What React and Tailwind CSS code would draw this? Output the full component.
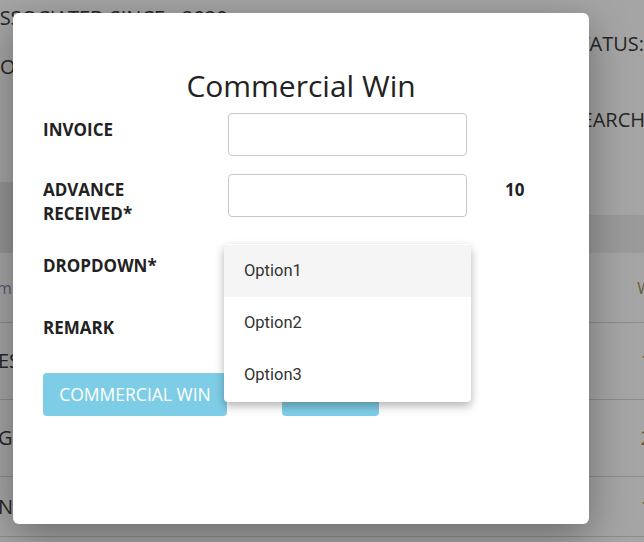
import React from "react";

export default function App() {
  return (
    <div className="relative w-[644px] h-[542px] overflow-hidden bg-[#a5a5a5] font-['Open_Sans',sans-serif] text-[#262626]">
      {/* background page */}
      <div className="flex flex-col">
        <div className="flex h-[182px] justify-between">
          <div className="flex flex-col">
            <div className="h-[36px] leading-[36px] text-[20px] -ml-[13px] whitespace-nowrap">ASSOCIATED SINCE - 2020</div>
            <div className="h-[62px] pt-[18px] leading-[26px] text-[20px] whitespace-nowrap">OWNER</div>
          </div>
          <div className="flex flex-col items-end whitespace-nowrap">
            <div className="pt-[31px] h-[107px] leading-[26px] text-[20px]">STATUS:</div>
            <div className="leading-[26px] -mr-[1px] text-[20px]">SEARCH</div>
          </div>
        </div>
        <div className="flex h-[71px]">
          <div className="w-[13px] bg-[#959595]"></div>
          <div className="flex-1 flex flex-col">
            <div className="h-[33px]"></div>
            <div className="flex-1 bg-[#9a9a9a]"></div>
          </div>
        </div>
        <div className="flex h-[70px] items-center justify-between border-b border-[#8c8c8c] text-[16px]">
          <span className="-ml-[3px] text-[#5a5670]">mm</span>
          <span className="-mr-[8px] text-[#6a5a40]">W</span>
        </div>
        <div className="flex h-[77px] items-center justify-between border-b border-[#8c8c8c] text-[20px]">
          <span className="-ml-[13px]">SES</span>
          <span className="-mr-[8px] text-[#6a5a40]">1</span>
        </div>
        <div className="flex h-[77px] items-center justify-between border-b border-[#8c8c8c] text-[20px]">
          <span className="-ml-[2px]">G</span>
          <span className="-mr-[8px] text-[#6a5a40]">2</span>
        </div>
        <div className="flex h-[60px] items-center justify-between border-b border-[#8c8c8c] text-[20px]">
          <span className="-ml-[2px]">N</span>
          <span className="-mr-[8px] text-[#6a5a40]">1</span>
        </div>
      </div>

      {/* modal */}
      <div className="absolute left-[13px] top-[13px] w-[576px] h-[511px] rounded-[6px] bg-white shadow-[0_12px_40px_rgba(0,0,0,0.35)]">
        <div className="flex flex-col pt-[53px] pl-[30px]">
          <div className="h-[40px] leading-[40px] text-[30px] text-[#222] text-center pr-[30px]">Commercial Win</div>
          <div className="mt-[7px] flex flex-col text-[#222]">
            <div className="flex h-[61px]">
              <div className="w-[185px] pt-[5px] leading-[24px] text-[17px] font-bold">INVOICE</div>
              <div className="w-[239px] h-[43px] rounded-[4px] border border-[#c8c8c8]"></div>
            </div>
            <div className="flex h-[75px]">
              <div className="w-[185px] pt-[4px] leading-[24px] text-[17px] font-bold">ADVANCE<br />RECEIVED*</div>
              <div className="w-[239px] h-[43px] rounded-[4px] border border-[#c8c8c8]"></div>
              <div className="ml-[38px] pt-[4px] leading-[24px] text-[17px] font-bold">10</div>
            </div>
            <div className="flex h-[62px]">
              <div className="w-[185px] pt-[5px] leading-[24px] text-[17px] font-bold">DROPDOWN*</div>
              <div className="w-[239px] h-[43px] rounded-[4px] border border-[#c8c8c8]"></div>
            </div>
            <div className="flex h-[62px]">
              <div className="w-[185px] pt-[5px] leading-[24px] text-[17px] font-bold">REMARK</div>
              <div className="w-[239px] h-[43px] rounded-[4px] border border-[#c8c8c8]"></div>
            </div>
            <div className="flex">
              <button className="w-[184px] h-[43px] rounded-[4px] bg-[#7ecde6] text-white text-[17.5px] leading-[43px]">COMMERCIAL WIN</button>
              <button className="ml-[55px] w-[97px] h-[43px] rounded-[4px] bg-[#7ecde6] text-white text-[17.5px] leading-[43px]">CANCEL</button>
            </div>
          </div>
        </div>

        {/* open dropdown menu */}
        <div className="absolute left-[211px] top-[231px] w-[247px] rounded-[4px] bg-white py-[1px] shadow-[0_4px_10px_rgba(0,0,0,0.3)] font-['Roboto',sans-serif] text-[16.5px] text-[#333]">
          <div className="h-[52px] leading-[52px] pl-[20px] bg-[#f5f5f5]">Option1</div>
          <div className="h-[52px] leading-[52px] pl-[20px]">Option2</div>
          <div className="h-[52px] leading-[52px] pl-[20px]">Option3</div>
        </div>
      </div>
    </div>
  );
}
